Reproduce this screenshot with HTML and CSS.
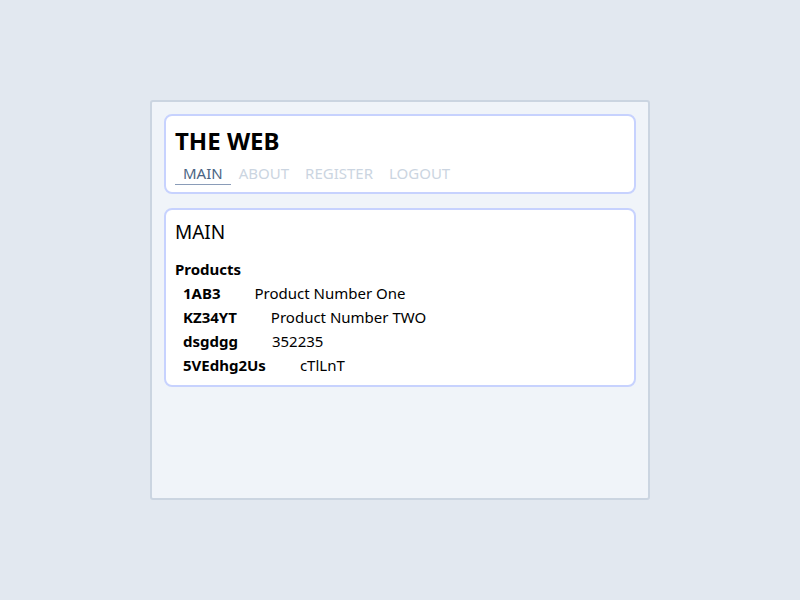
FILE: index.html
```html
<!DOCTYPE html>
<html>
<head>
<meta charset="utf-8">
<link rel="stylesheet" href="styles.css">
</head>
<body>
<div class="app">
  <header class="card header">
    <h1 class="title">THE WEB</h1>
    <nav class="nav">
      <a class="nav-item active">MAIN</a>
      <a class="nav-item">ABOUT</a>
      <a class="nav-item">REGISTER</a>
      <a class="nav-item">LOGOUT</a>
    </nav>
  </header>
  <main class="card content">
    <h2 class="heading">MAIN</h2>
    <div class="section-title">Products</div>
    <ul class="products">
      <li class="product"><span class="code">1AB3</span><span class="desc">Product Number One</span></li>
      <li class="product"><span class="code">KZ34YT</span><span class="desc">Product Number TWO</span></li>
      <li class="product"><span class="code">dsgdgg</span><span class="desc">352235</span></li>
      <li class="product"><span class="code">5VEdhg2Us</span><span class="desc">cTlLnT</span></li>
    </ul>
  </main>
</div>
</body>
</html>
```
FILE: styles.css
```css
html, body {
  margin: 0;
  padding: 0;
}
body {
  background: #e2e8f0;
  font-family: "Noto Sans", "Open Sans", sans-serif;
  color: #000;
  height: 600px;
  display: flex;
  justify-content: center;
  padding-top: 100px;
  box-sizing: border-box;
}
.app {
  width: 500px;
  height: 400px;
  box-sizing: border-box;
  background: #f0f4f9;
  border: 2px solid #cbd5e1;
  border-radius: 3px;
  padding: 12px;
  display: flex;
  flex-direction: column;
  gap: 14px;
}
.card {
  background: #fff;
  border: 2px solid #c7d2fe;
  border-radius: 8px;
  padding: 0 9px;
}
.header {
  height: 80px;
  box-sizing: border-box;
  padding-top: 10px;
}
.title {
  margin: 0;
  font-size: 24px;
  font-weight: 700;
  line-height: 30px;
}
.nav {
  display: flex;
  gap: 16px;
  margin-top: 6px;
}
.nav-item {
  font-size: 15px;
  line-height: 22px;
  color: #cbd5e1;
}
.nav-item.active {
  color: #4b6584;
  padding: 0 8px;
  border-bottom: 1px solid #8a9cb8;
  margin-right: -8px;
}
.content {
  padding-top: 8px;
  padding-bottom: 8px;
}
.heading {
  margin: 0;
  font-size: 19px;
  font-weight: 400;
  line-height: 28px;
}
.section-title {
  margin-top: 11px;
  font-size: 15px;
  font-weight: 700;
  line-height: 24px;
}
.products {
  list-style: none;
  margin: 0;
  padding: 0 0 0 8px;
}
.product {
  font-size: 15px;
  line-height: 24px;
}
.code {
  font-weight: 700;
  margin-right: 34px;
}
```
